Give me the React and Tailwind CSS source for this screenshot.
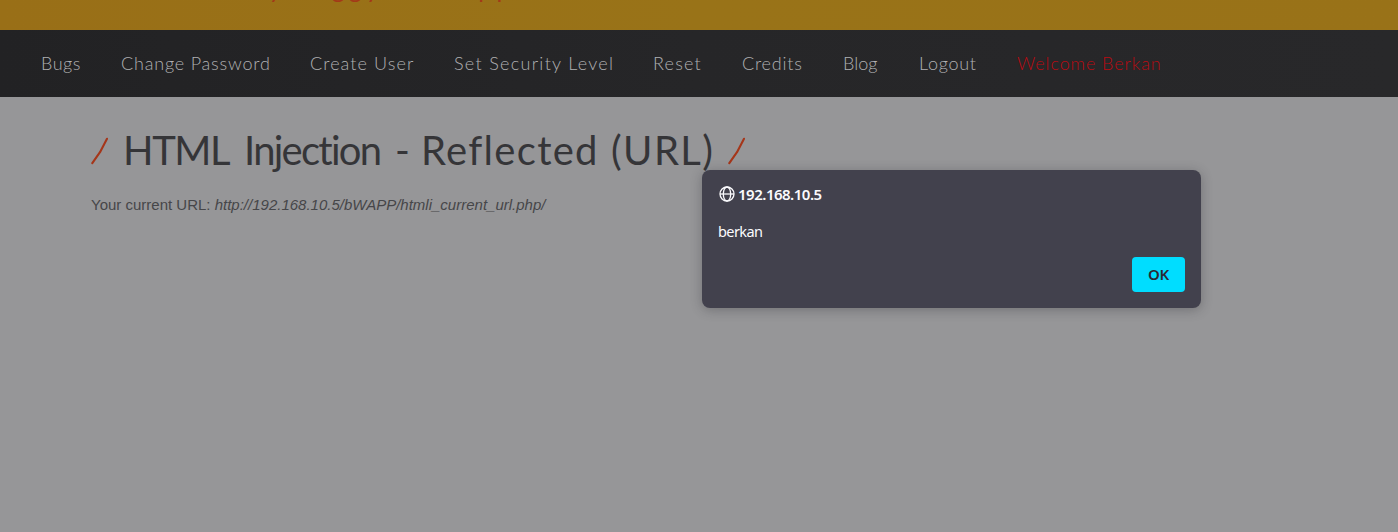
import React from "react";

const navItems = [
  { label: "Bugs", cls: "w-[40px] tracking-[0.5px]" },
  { label: "Change Password", cls: "w-[149px] tracking-[0.8px]" },
  { label: "Create User", cls: "w-[104px] tracking-[1.1px]" },
  { label: "Set Security Level", cls: "w-[159px] tracking-[1.3px]" },
  { label: "Reset", cls: "w-[49px] tracking-[1.2px]" },
  { label: "Credits", cls: "w-[61px] tracking-[0.8px]" },
  { label: "Blog", cls: "w-[36px] tracking-[0px]" },
  { label: "Logout", cls: "w-[58px] tracking-[0.7px]" },
  { label: "Welcome Berkan", cls: "w-[145px] tracking-[0.9px] text-[#b80b12]" },
];

const titleWords = [
  { text: "HTML", cls: "w-[121px] tracking-[-1.4px]" },
  { text: "Injection", cls: "w-[151px] tracking-[-1.75px]" },
  { text: "-", cls: "w-[26px]" },
  { text: "Reflected", cls: "w-[190px] tracking-[1.3px]" },
  { text: "(URL)", cls: "w-[116px] tracking-[1.4px]" },
];

function Slash() {
  return (
    <svg className="h-[28px] w-[17px] shrink-0" viewBox="0 0 17 28" fill="none">
      <path d="M1.3 26.2 L9 15.2 L16 1.8" stroke="#a5361a" strokeWidth="2.1" strokeLinecap="round" strokeLinejoin="round" />
    </svg>
  );
}

function Globe() {
  return (
    <svg className="h-4 w-4" viewBox="0 0 16 16" fill="none" stroke="#fbfbfe" strokeWidth="1.3">
      <circle cx="8" cy="8" r="7" />
      <ellipse cx="8" cy="8" rx="3.7" ry="7" />
      <path d="M1 8h14" />
    </svg>
  );
}

export default function App() {
  return (
    <div className="relative flex h-[532px] w-[1398px] flex-col overflow-hidden bg-[#969698] font-['Liberation_Sans',sans-serif]">
      <header className="flex h-[30px] shrink-0 items-start overflow-hidden bg-linear-to-r from-[#996f17] via-[#997318] to-[#997218] pl-[95px]">
        <p className="-mt-[26px] whitespace-nowrap font-['Lato',sans-serif] text-[25px] leading-[28px] tracking-[4.1px] text-[#a33a18]">
          an extremely buggy web app !
        </p>
      </header>

      <nav className="flex h-[67px] shrink-0 items-center gap-10 bg-linear-to-r from-[#222224] via-[#262628] to-[#28282a] pb-[2px] pl-[41px] font-['Lato',sans-serif] text-[18px] leading-6 font-light text-[#b0b0b2]">
        {navItems.map((item) => (
          <a key={item.label} className={"shrink-0 whitespace-nowrap " + item.cls}>
            {item.label}
          </a>
        ))}
      </nav>

      <main className="pt-[29px] pl-[91px]">
        <h1 className="flex h-[50px] items-center font-['Lato',sans-serif] text-[40px] leading-[46px] text-[#353538]">
          <span className="mr-[15px] flex"><Slash /></span>
          {titleWords.map((word) => (
            <span key={word.text} className={"mb-[3px] shrink-0 whitespace-nowrap " + word.cls}>
              {word.text}
            </span>
          ))}
          <span className="ml-px flex"><Slash /></span>
        </h1>
        <p className="mt-[19px] text-[15px] leading-5 text-[#464649]">
          Your current URL: <i>http://192.168.10.5/bWAPP/htmli_current_url.php/</i>
        </p>
      </main>

      <section
        role="dialog"
        className="absolute top-[170px] left-[702px] flex h-[138px] w-[499px] flex-col rounded-lg bg-[#42414d] p-4 pt-[15px] font-['Noto_Sans',sans-serif] text-[#fbfbfe] shadow-[0_2px_12px_rgba(30,30,36,0.3)]"
      >
        <div className="flex h-[18px] items-center gap-[3px] pl-px text-[15px] font-semibold tracking-[-0.5px]">
          <Globe />
          <span>192.168.10.5</span>
        </div>
        <p className="mt-[18px] text-[14.5px] leading-5 tracking-[-0.6px]">berkan</p>
        <button className="mt-[16px] h-[35px] w-[53px] shrink-0 self-end rounded bg-[#00ddff] text-[15px] leading-[35px] font-semibold tracking-[-0.3px] text-[#2b2a33]">
          OK
        </button>
      </section>
    </div>
  );
}
